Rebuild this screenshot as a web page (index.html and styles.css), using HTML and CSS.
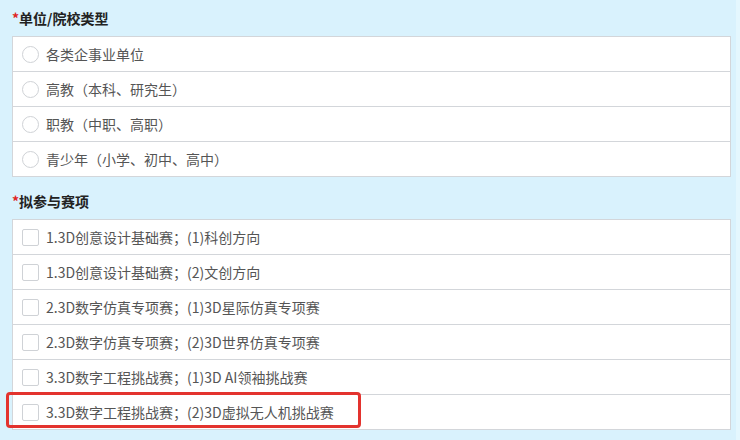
FILE: index.html
```html
<!DOCTYPE html>
<html lang="zh-CN">
<head>
  <meta charset="UTF-8" />
  <meta name="viewport" content="width=device-width, initial-scale=1.0"/>
  <title>报名信息</title>
  <link rel="stylesheet" href="styles.css">
</head>
<body>
  <div class="page">

    <div class="field-label"><span class="req">*</span>单位/院校类型</div>
    <div class="option-list">
      <label class="option"><span class="radio"></span>各类企事业单位</label>
      <label class="option"><span class="radio"></span>高教（本科、研究生）</label>
      <label class="option"><span class="radio"></span>职教（中职、高职）</label>
      <label class="option"><span class="radio"></span>青少年（小学、初中、高中）</label>
    </div>

    <div class="field-label second"><span class="req">*</span>拟参与赛项</div>
    <div class="option-list">
      <label class="option"><span class="check"></span>1.3D创意设计基础赛；(1)科创方向</label>
      <label class="option"><span class="check"></span>1.3D创意设计基础赛；(2)文创方向</label>
      <label class="option"><span class="check"></span>2.3D数字仿真专项赛；(1)3D星际仿真专项赛</label>
      <label class="option"><span class="check"></span>2.3D数字仿真专项赛；(2)3D世界仿真专项赛</label>
      <label class="option"><span class="check"></span>3.3D数字工程挑战赛；(1)3D AI领袖挑战赛</label>
      <label class="option marked"><span class="check"></span>3.3D数字工程挑战赛；(2)3D虚拟无人机挑战赛</label>
    </div>

  </div>
</body>
</html>
```

FILE: styles.css
```css
body {
  margin: 0;
  background: #e4f7fe;
  font-family: "Noto Sans CJK SC", "Noto Sans", sans-serif;
}
.page {
  width: 736px;
  height: 440px;
  box-sizing: border-box;
  padding: 8px 5px 0 12px;
  background: #d9f2fd;
  overflow: hidden;
}
.field-label {
  font-size: 14px;
  font-weight: bold;
  line-height: 20px;
  color: #222;
  margin-bottom: 8px;
}
.field-label.second {
  margin-top: 14px;
}
.req {
  color: #e02424;
  font-weight: bold;
}
.option-list {
  background: white;
  border: 1px solid #d3d6da;
}
.option {
  position: relative;
  display: flex;
  align-items: center;
  height: 34px;
  padding-left: 9px;
  font-size: 14px;
  color: #555;
  border-top: 1px solid #d3d6da;
}
.option:first-child {
  border-top: none;
}
.radio {
  flex: none;
  width: 15px;
  height: 15px;
  border: 1px solid #cfd2d6;
  border-radius: 50%;
  margin-right: 7px;
}
.check {
  flex: none;
  width: 15px;
  height: 15px;
  border: 1px solid #cfd2d6;
  border-radius: 2px;
  margin-right: 7px;
}
.option.marked::after {
  content: "";
  position: absolute;
  left: -7px;
  top: -3px;
  width: 349px;
  height: 30px;
  border: 3px solid #e3332e;
  border-radius: 4px;
}
```
